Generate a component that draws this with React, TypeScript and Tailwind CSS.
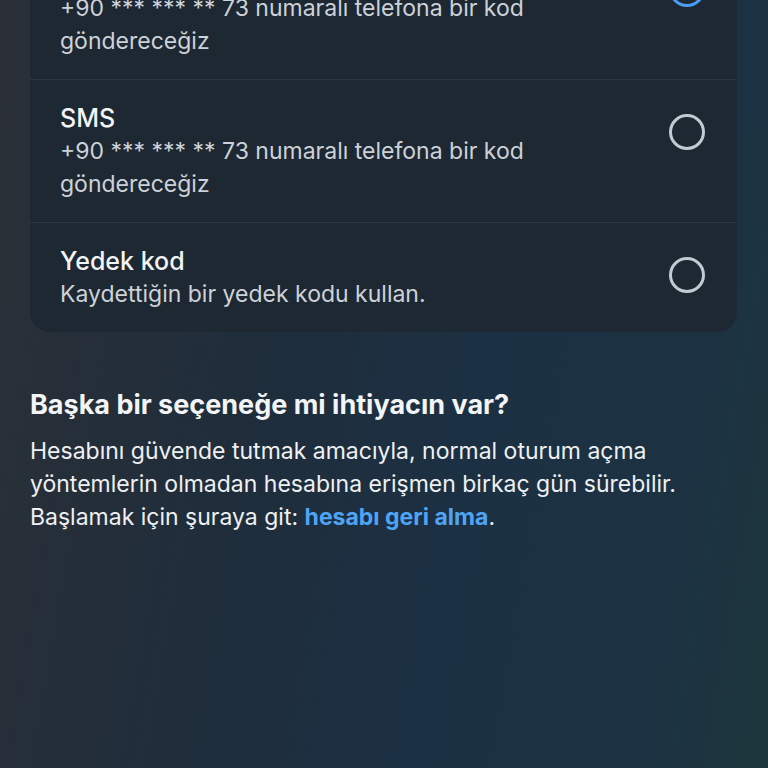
import React from "react";

function Radio({ selected }: { selected?: boolean }) {
  if (selected) {
    return (
      <div className="w-[36px] h-[36px] rounded-full border-[3px] border-[#4a9cf5] flex items-center justify-center shrink-0">
        <div className="w-[18px] h-[18px] rounded-full bg-[#4a9cf5]" />
      </div>
    );
  }
  return <div className="w-[36px] h-[36px] rounded-full border-[3px] border-[#c3cad1] shrink-0" />;
}

function Row({ title, lines, selected, last }: { title: string; lines: string[]; selected?: boolean; last?: boolean }) {
  return (
    <div className={"flex items-start justify-between pl-[30px] pr-[32px] py-[21px] " + (last ? "" : "border-b border-[#2b3641]")}>
      <div className="flex flex-col">
        <div className="text-[25px] leading-[34px] font-medium text-[#f2f4f6]">{title}</div>
        {lines.map((l, i) => (
          <div key={i} className="text-[23px] leading-[33px] text-[#ccd2d8]">{l}</div>
        ))}
      </div>
      <div className="pt-[13px]">
        <Radio selected={selected} />
      </div>
    </div>
  );
}

export default function App() {
  return (
    <div
      className="w-[768px] h-[768px] overflow-hidden bg-[linear-gradient(100deg,#2b3037_0%,#1f2d3b_35%,#1c3043_60%,#1c3242_85%,#1d363c_100%)]"
      style={{ fontFamily: "Inter, 'Noto Sans', sans-serif" }}
    >
      <div className="mx-[30px] mt-[-63px] w-[707px] rounded-b-[20px] bg-[#1e2833] overflow-hidden">
        <Row title="WhatsApp" lines={["+90 *** *** ** 73 numaralı telefona bir kod", "göndereceğiz"]} selected />
        <Row title="SMS" lines={["+90 *** *** ** 73 numaralı telefona bir kod", "göndereceğiz"]} />
        <Row title="Yedek kod" lines={["Kaydettiğin bir yedek kodu kullan."]} last />
      </div>
      <div className="px-[30px] pt-[58px]">
        <h2 className="text-[27px] leading-[30px] font-bold text-[#f2f4f6] whitespace-nowrap">Başka bir seçeneğe mi ihtiyacın var?</h2>
        <p className="mt-[15px] text-[23px] leading-[33px] text-[#eef0f3] whitespace-nowrap">
          Hesabını güvende tutmak amacıyla, normal oturum açma
          <br />
          yöntemlerin olmadan hesabına erişmen birkaç gün sürebilir.
          <br />
          Başlamak için şuraya git: <span className="font-bold text-[#4ea5f5]">hesabı geri alma</span>.
        </p>
      </div>
    </div>
  );
}
